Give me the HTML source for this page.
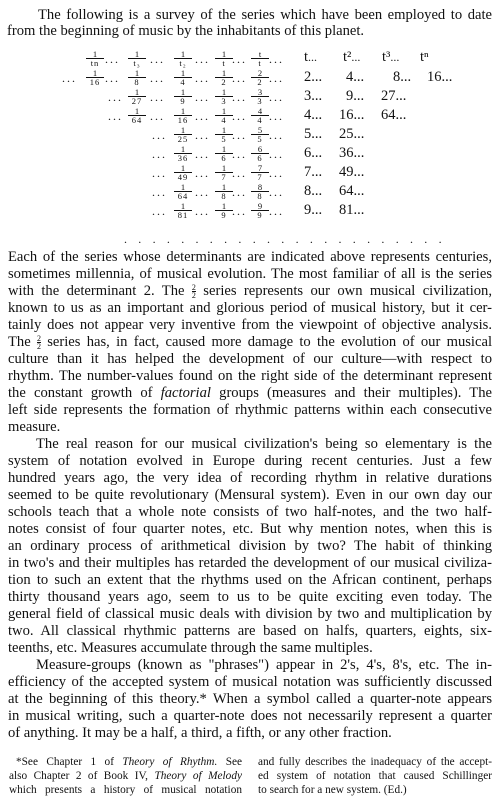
<!DOCTYPE html>
<html><head><meta charset="utf-8"><style>
body{margin:0;width:500px;height:798px;background:#fff;position:relative;overflow:hidden;font-family:"Liberation Serif",serif;color:#111}
.l{position:absolute;left:8px;width:484px;font-size:14.6px;line-height:17px;height:17px;overflow:hidden;text-align:justify;text-align-last:justify}
.e{text-align-last:left}
.in{left:36px;width:456px}
.a{position:absolute;font-size:14.5px;line-height:15px;white-space:nowrap}
.f{position:absolute;font-size:8.5px;line-height:8px;text-align:center;width:18px;margin-left:-9px}
.f i{display:block;border-top:1px solid #111;font-style:normal;letter-spacing:1px}
.d{position:absolute;font-size:12px;letter-spacing:2px;white-space:nowrap}
.fi{display:inline-block;vertical-align:-3px;font-size:8px;line-height:7px;text-align:center}
.fi i{display:block;border-top:1px solid #111;font-style:normal}
.fn{position:absolute;font-size:11.3px;line-height:13.6px;height:14px;overflow:hidden;text-align:justify;text-align-last:justify}
</style></head><body>
<div class="l in" style="top:7px;left:38px;width:454px">The following is a survey of the series which have been employed to date</div>
<div class="l e" style="top:23px;left:7px">from the beginning of music by the inhabitants of this planet.</div>

<!-- row 1 -->
<div class="f" style="left:95px;top:50px">1<i>tn</i></div>
<div class="f" style="left:137px;top:50px">1<i>t₃</i></div>
<div class="f" style="left:183px;top:50px">1<i>t₂</i></div>
<div class="f" style="left:224px;top:50px">1<i>t</i></div>
<div class="f" style="left:260px;top:50px">t<i>t</i></div>
<div class="d" style="left:105px;top:52px">...</div><div class="d" style="left:150px;top:52px">...</div><div class="d" style="left:195px;top:52px">...</div><div class="d" style="left:232px;top:52px">...</div><div class="d" style="left:269px;top:52px">...</div>
<div class="a" style="left:304px;top:50px">t<span style="font-size:12px">...</span></div><div class="a" style="left:343px;top:50px">t²<span style="font-size:12px">...</span></div><div class="a" style="left:382px;top:50px">t³<span style="font-size:12px">...</span></div><div class="a" style="left:420px;top:50px">tⁿ</div>

<!-- row 2 -->
<div class="d" style="left:62px;top:71px">...</div>
<div class="f" style="left:95px;top:69px">1<i>16</i></div>
<div class="f" style="left:137px;top:69px">1<i>8</i></div>
<div class="f" style="left:183px;top:69px">1<i>4</i></div>
<div class="f" style="left:224px;top:69px">1<i>2</i></div>
<div class="f" style="left:260px;top:69px">2<i>2</i></div>
<div class="d" style="left:105px;top:71px">...</div><div class="d" style="left:150px;top:71px">...</div><div class="d" style="left:195px;top:71px">...</div><div class="d" style="left:232px;top:71px">...</div><div class="d" style="left:269px;top:71px">...</div>
<div class="a" style="left:304px;top:70px">2...</div><div class="a" style="left:346px;top:70px">4...</div><div class="a" style="left:393px;top:70px">8...</div><div class="a" style="left:427px;top:70px">16...</div>

<!-- rows 3-4 -->
<div class="d" style="left:108px;top:90px">...</div>
<div class="f" style="left:137px;top:88px">1<i>27</i></div>
<div class="f" style="left:183px;top:88px">1<i>9</i></div>
<div class="f" style="left:224px;top:88px">1<i>3</i></div>
<div class="f" style="left:260px;top:88px">3<i>3</i></div>
<div class="d" style="left:150px;top:90px">...</div><div class="d" style="left:195px;top:90px">...</div><div class="d" style="left:232px;top:90px">...</div><div class="d" style="left:269px;top:90px">...</div>
<div class="a" style="left:304px;top:89px">3...</div><div class="a" style="left:346px;top:89px">9...</div><div class="a" style="left:381px;top:89px">27...</div>

<div class="d" style="left:108px;top:109px">...</div>
<div class="f" style="left:137px;top:107px">1<i>64</i></div>
<div class="f" style="left:183px;top:107px">1<i>16</i></div>
<div class="f" style="left:224px;top:107px">1<i>4</i></div>
<div class="f" style="left:260px;top:107px">4<i>4</i></div>
<div class="d" style="left:150px;top:109px">...</div><div class="d" style="left:195px;top:109px">...</div><div class="d" style="left:232px;top:109px">...</div><div class="d" style="left:269px;top:109px">...</div>
<div class="a" style="left:304px;top:108px">4...</div><div class="a" style="left:339px;top:108px">16...</div><div class="a" style="left:381px;top:108px">64...</div>

<!-- rows 5-9 -->
<div class="d" style="left:152px;top:128px">...</div><div class="f" style="left:183px;top:126px">1<i>25</i></div><div class="f" style="left:224px;top:126px">1<i>5</i></div><div class="f" style="left:260px;top:126px">5<i>5</i></div><div class="d" style="left:195px;top:128px">...</div><div class="d" style="left:232px;top:128px">...</div><div class="d" style="left:269px;top:128px">...</div><div class="a" style="left:304px;top:127px">5...</div><div class="a" style="left:339px;top:127px">25...</div>
<div class="d" style="left:152px;top:147px">...</div><div class="f" style="left:183px;top:145px">1<i>36</i></div><div class="f" style="left:224px;top:145px">1<i>6</i></div><div class="f" style="left:260px;top:145px">6<i>6</i></div><div class="d" style="left:195px;top:147px">...</div><div class="d" style="left:232px;top:147px">...</div><div class="d" style="left:269px;top:147px">...</div><div class="a" style="left:304px;top:146px">6...</div><div class="a" style="left:339px;top:146px">36...</div>
<div class="d" style="left:152px;top:166px">...</div><div class="f" style="left:183px;top:164px">1<i>49</i></div><div class="f" style="left:224px;top:164px">1<i>7</i></div><div class="f" style="left:260px;top:164px">7<i>7</i></div><div class="d" style="left:195px;top:166px">...</div><div class="d" style="left:232px;top:166px">...</div><div class="d" style="left:269px;top:166px">...</div><div class="a" style="left:304px;top:165px">7...</div><div class="a" style="left:339px;top:165px">49...</div>
<div class="d" style="left:152px;top:185px">...</div><div class="f" style="left:183px;top:183px">1<i>64</i></div><div class="f" style="left:224px;top:183px">1<i>8</i></div><div class="f" style="left:260px;top:183px">8<i>8</i></div><div class="d" style="left:195px;top:185px">...</div><div class="d" style="left:232px;top:185px">...</div><div class="d" style="left:269px;top:185px">...</div><div class="a" style="left:304px;top:184px">8...</div><div class="a" style="left:339px;top:184px">64...</div>
<div class="d" style="left:152px;top:204px">...</div><div class="f" style="left:183px;top:202px">1<i>81</i></div><div class="f" style="left:224px;top:202px">1<i>9</i></div><div class="f" style="left:260px;top:202px">9<i>9</i></div><div class="d" style="left:195px;top:204px">...</div><div class="d" style="left:232px;top:204px">...</div><div class="d" style="left:269px;top:204px">...</div><div class="a" style="left:304px;top:203px">9...</div><div class="a" style="left:339px;top:203px">81...</div>

<div class="d" style="left:124px;top:232px;letter-spacing:11.3px">.......................</div>

<div style="position:absolute;top:249px;left:0;width:500px">
<div class="l" style="top:0">Each of the series whose determinants are indicated above represents centuries,</div>
<div class="l" style="top:17px">sometimes millennia, of musical evolution. The most familiar of all is the series</div>
<div class="l" style="top:34px">with the determinant 2. The <span class="fi">2<i>2</i></span> series represents our own musical civilization,</div>
<div class="l" style="top:51px">known to us as an important and glorious period of musical history, but it cer-</div>
<div class="l" style="top:68px">tainly does not appear very inventive from the viewpoint of objective analysis.</div>
<div class="l" style="top:85px">The <span class="fi">2<i>2</i></span> series has, in fact, caused more damage to the evolution of our musical</div>
<div class="l" style="top:102px">culture than it has helped the development of our culture—with respect to</div>
<div class="l" style="top:119px">rhythm. The number-values found on the right side of the determinant represent</div>
<div class="l" style="top:136px">the constant growth of <i>factorial</i> groups (measures and their multiples). The</div>
<div class="l" style="top:153px">left side represents the formation of rhythmic patterns within each consecutive</div>
<div class="l e" style="top:170px">measure.</div>
<div class="l in" style="top:187px">The real reason for our musical civilization's being so elementary is the</div>
<div class="l" style="top:204px">system of notation evolved in Europe during recent centuries. Just a few</div>
<div class="l" style="top:221px">hundred years ago, the very idea of recording rhythm in relative durations</div>
<div class="l" style="top:238px">seemed to be quite revolutionary (Mensural system). Even in our own day our</div>
<div class="l" style="top:255px">schools teach that a whole note consists of two half-notes, and the two half-</div>
<div class="l" style="top:272px">notes consist of four quarter notes, etc. But why mention notes, when this is</div>
<div class="l" style="top:289px">an ordinary process of arithmetical division by two? The habit of thinking</div>
<div class="l" style="top:306px">in two's and their multiples has retarded the development of our musical civiliza-</div>
<div class="l" style="top:323px">tion to such an extent that the rhythms used on the African continent, perhaps</div>
<div class="l" style="top:340px">thirty thousand years ago, seem to us to be quite exciting even today. The</div>
<div class="l" style="top:357px">general field of classical music deals with division by two and multiplication by</div>
<div class="l" style="top:374px">two. All classical rhythmic patterns are based on halfs, quarters, eights, six-</div>
<div class="l e" style="top:391px">teenths, etc. Measures accumulate through the same multiples.</div>
<div class="l in" style="top:408px">Measure-groups (known as "phrases") appear in 2's, 4's, 8's, etc. The in-</div>
<div class="l" style="top:425px">efficiency of the accepted system of musical notation was sufficiently discussed</div>
<div class="l" style="top:442px">at the beginning of this theory.* When a symbol called a quarter-note appears</div>
<div class="l" style="top:459px">in musical writing, such a quarter-note does not necessarily represent a quarter</div>
<div class="l e" style="top:476px">of anything. It may be a half, a third, a fifth, or any other fraction.</div>
</div>

<div class="fn" style="left:16px;width:226px;top:756px">*See Chapter 1 of <i>Theory of Rhythm.</i> See</div>
<div class="fn" style="left:9px;width:233px;top:770px">also Chapter 2 of Book IV, <i>Theory of Melody</i></div>
<div class="fn" style="left:9px;width:233px;top:784px">which presents a history of musical notation</div>
<div class="fn" style="left:258px;width:234px;top:756px">and fully describes the inadequacy of the accept-</div>
<div class="fn" style="left:258px;width:234px;top:770px">ed system of notation that caused Schillinger</div>
<div class="fn" style="left:258px;width:234px;top:784px;text-align-last:left">to search for a new system. (Ed.)</div>
</body></html>
